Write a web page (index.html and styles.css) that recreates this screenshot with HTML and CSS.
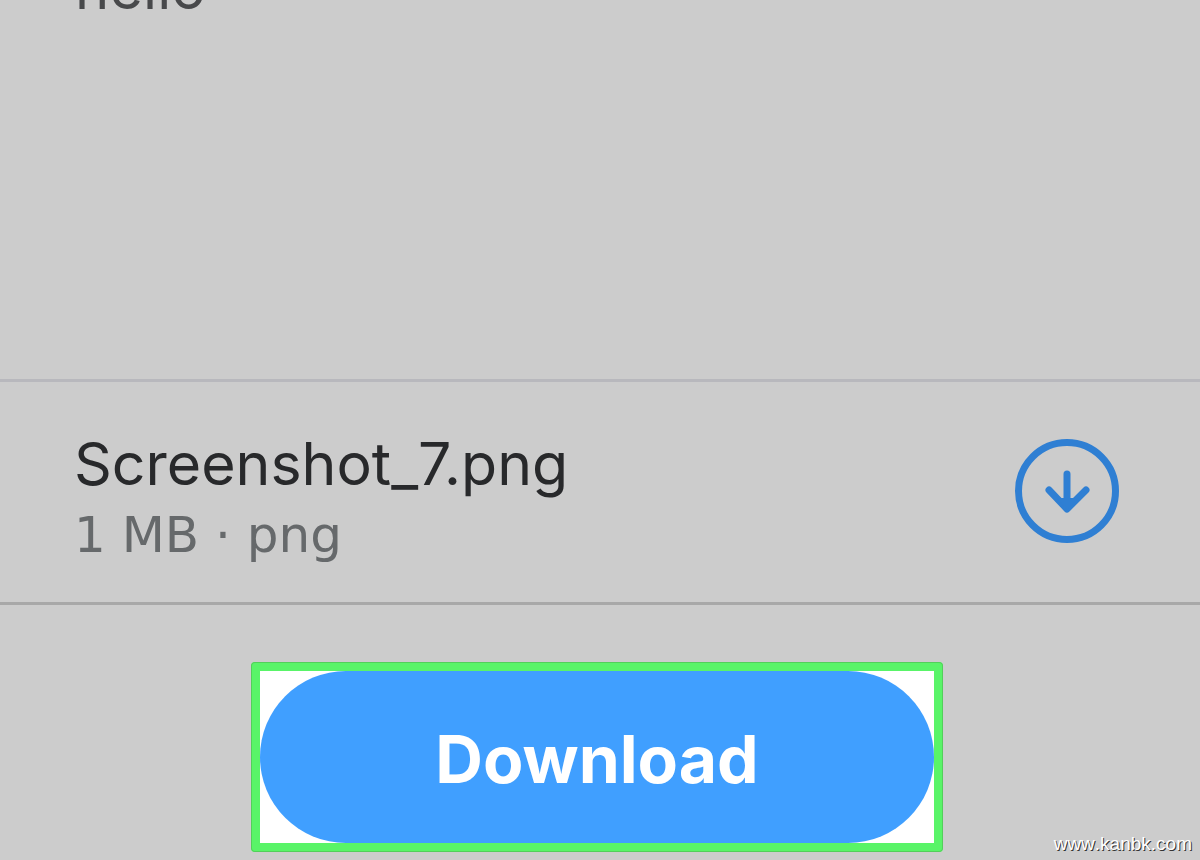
FILE: index.html
```html
<!DOCTYPE html>
<html lang="en">
<head>
<meta charset="utf-8">
<title>Download files</title>
<link rel="stylesheet" href="styles.css">
</head>
<body>
<main class="panel">
  <section class="message"><p class="message-text">hello</p></section>
  <section class="file">
    <div class="file-info">
      <h1 class="file-name">Screenshot_7.png</h1>
      <p class="file-meta">1 MB · png</p>
    </div>
    <button class="file-get" type="button" aria-label="Download Screenshot_7.png">
      <svg class="file-icon" viewBox="0 0 106 106" fill="none" stroke="currentColor" stroke-width="7" stroke-linecap="round" stroke-linejoin="round"><circle cx="53" cy="53" r="48.5"/><path stroke-width="7" d="M53 36V70M35 52L53 71L72 52"/><path fill="currentColor" stroke="none" d="M43 60H64L53 72Z"/></svg>
    </button>
  </section>
  <footer class="actions">
    <div class="highlight"><button class="download" type="button">Download</button></div>
  </footer>
</main>
<span class="watermark">www.kanbk.com</span>
</body>
</html>
```
FILE: styles.css
```css
* { box-sizing: border-box; }
body { margin: 0; background: #cccccc; color: #28292b; font-family: Inter, "Liberation Sans", sans-serif; }
h1, p { margin: 0; }
button { border: 0; font: inherit; cursor: pointer; }
.panel { display: flex; flex-direction: column; min-height: 100vh; overflow: hidden; }
.message { height: 382px; padding: 0 75px; border-bottom: 3px solid #b8b8bd; }
.message-text { margin-top: -44px; font-size: 58px; line-height: 64px; color: #48494b; }
.file { display: flex; align-items: flex-start; justify-content: space-between; padding: 48px 80px 30px 74px; border-bottom: 3px solid #a8a8a8; }
.file-name { font-size: 59px; line-height: 68px; font-weight: 400; }
.file-meta { font-family: "DejaVu Sans", sans-serif; font-size: 50px; line-height: 74px; color: #66696b; }
.file-get { width: 106px; height: 106px; margin-top: 8px; padding: 0; background: none; color: #2f7fd3; }
.file-icon { display: block; }
.actions { display: flex; justify-content: center; padding: 57px 6px 0 0; }
.highlight { width: 58%; padding: 9px; background: #ffffff; border-radius: 4px; box-shadow: inset 0 0 0 1px #52cf5a, inset 0 0 0 9px #59f468; }
.download { display: block; width: 100%; height: 172px; padding: 4px 0 0; border-radius: 86px; background: #409fff; color: #ffffff; font-size: 66px; font-weight: 700; }
.watermark { position: absolute; right: 8px; bottom: 6px; font-family: "Liberation Sans", sans-serif; font-size: 19px; font-kerning: none; line-height: 20px; color: #ffffff; text-shadow: 1px 1px 0 #333333; }
```
